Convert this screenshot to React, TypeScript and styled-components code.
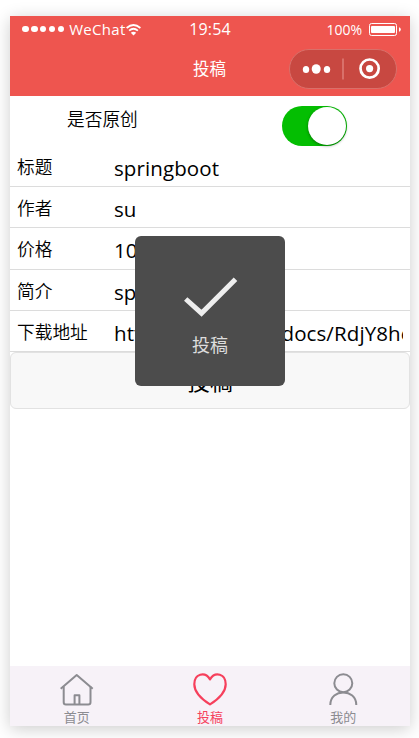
import React from 'react';
import styled, { createGlobalStyle } from 'styled-components';

const GlobalStyle = createGlobalStyle`
  * { box-sizing: border-box; }
  body {
    margin: 0;
    background: #fff;
    overflow: hidden;
    font-family: "Open Sans", "Noto Sans CJK SC", sans-serif;
    color: #000;
  }
`;

const cjk = '"Noto Sans CJK SC", sans-serif';

const Stage = styled.div`
  height: 738px;
  padding: 16px 9px 12px 10px;
  overflow: hidden;
`;

const Phone = styled.div`
  position: relative;
  display: flex;
  flex-direction: column;
  width: 400px;
  height: 710px;
  background: #fff;
  box-shadow: 0 3px 16px rgba(0, 0, 0, 0.2);
`;

const Header = styled.header`
  height: 80px;
  background: #ee554f;
  color: #fff;
`;

const StatusBar = styled.div`
  display: grid;
  grid-template-columns: 1fr auto 1fr;
  align-items: center;
  height: 27px;
  padding: 0 9px 0 12px;
  font-size: 15px;
  line-height: 27px;
`;

const Carrier = styled.div`
  display: flex;
  align-items: center;
`;

const Dots = styled.div`
  display: flex;
  gap: 2.2px;
  margin: -1px 5px 0 0;
`;

const Dot = styled.i`
  width: 6.7px;
  height: 6.7px;
  border-radius: 50%;
  background: #fff;
`;

const Network = styled.span`
  margin-top: -1px;
  font-size: 15px;
  letter-spacing: 0.3px;
`;

const Clock = styled.span`
  margin-left: -3px;
  font-size: 16px;
  letter-spacing: 0.1px;
`;

const Power = styled.div`
  display: flex;
  justify-content: flex-end;
  align-items: center;
  gap: 7px;
  font-size: 14px;
`;

const NavBar = styled.div`
  display: grid;
  grid-template-columns: 1fr auto 1fr;
  align-items: center;
  height: 53px;
  padding: 0 13px;
`;

const Title = styled.h1`
  grid-column: 2;
  margin: -4px 0 0 -1px;
  font: 400 16.5px/24px ${cjk};
`;

const Capsule = styled.div`
  justify-self: end;
  display: flex;
  align-items: center;
  width: 108px;
  height: 40px;
  margin-top: -1px;
  border: 1px solid #d9706a;
  border-radius: 20px;
  background: #c84841;
`;

const Content = styled.main`
  flex: 1;
`;

const SwitchRow = styled.div`
  display: flex;
  height: 50px;
  padding: 10px 62px 0 57px;
  justify-content: space-between;
`;

const SwitchLabel = styled.span`
  margin-top: -1px;
  font: 350 17.7px/26px ${cjk};
`;

const Switch = styled.div`
  display: flex;
  justify-content: flex-end;
  width: 65px;
  height: 40px;
  margin-right: 1px;
  padding: 1px;
  border-radius: 20px;
  background: #04be02;
`;

const Knob = styled.div`
  width: 38px;
  height: 38px;
  border-radius: 50%;
  background: #fff;
  box-shadow: 0 1px 3px rgba(0, 0, 0, 0.4);
`;

const Field = styled.div`
  display: flex;
  height: 41.2px;
  padding: 0 7px;
  border-bottom: 1px solid #dcdcdc;
`;

const FieldLabel = styled.label`
  width: 97px;
  padding-top: 7px;
  font: 350 17.7px/26px ${cjk};
  white-space: nowrap;
`;

const Value = styled.div`
  flex: 1;
  min-width: 0;
  overflow: hidden;
  padding-top: 7px;
  font-size: 20.5px;
  letter-spacing: 0.1px;
  line-height: 31px;
  white-space: nowrap;
`;

const Submit = styled.button`
  display: block;
  width: 100%;
  height: 57px;
  padding: 0;
  border: 1px solid #e2e2e2;
  border-radius: 6px;
  background: #f8f8f8;
  color: #000;
  font: 400 22.7px/55px ${cjk};
`;

const TabBar = styled.nav`
  display: grid;
  grid-template-columns: repeat(3, 1fr);
  height: 60px;
  background: #f7f2f8;
`;

const Tab = styled.div<{ $active?: boolean }>`
  display: flex;
  flex-direction: column;
  align-items: center;
  padding-top: 5px;
  color: ${(p) => (p.$active ? '#f6405c' : '#8c8c91')};
  font: 400 13px/19px ${cjk};
  svg { display: block; }
`;

const Toast = styled.div`
  position: absolute;
  left: 125px;
  top: 220px;
  display: flex;
  flex-direction: column;
  align-items: center;
  width: 150px;
  height: 150px;
  padding-top: 40px;
  border-radius: 6px;
  background: #4c4c4c;
  color: #ddd;
  font: 400 18px/26px ${cjk};
  svg { display: block; margin-bottom: 13px; }
`;

const fields = [
  ['标题', 'springboot'],
  ['作者', 'su'],
  ['价格', '10'],
  ['简介', 'springboot'],
  ['下载地址', 'https://shimo.im/docs/RdjY8hc'],
];

const Wifi = () => (
  <svg width="15" height="12" viewBox="0 0 15 12" fill="none" stroke="#fff" strokeWidth="1.7">
    <path d="M.6 4Q7.5-2 14.4 4M3.1 6.7Q7.5 2.8 11.9 6.7" />
    <path d="M7.5 11.4 4.8 8.7Q7.5 6.6 10.2 8.7Z" fill="#fff" stroke="none" />
  </svg>
);

const Battery = () => (
  <svg width="32" height="13" viewBox="0 0 32 13" fill="#fff">
    <rect x=".5" y=".5" width="27" height="12" rx="2" fill="none" stroke="#fff" />
    <rect x="2" y="3" width="24" height="7" rx="1" />
    <path d="M30 4.2q1.8.5 1.8 2.3T30 8.8Z" />
  </svg>
);

const CapsuleIcons = () => (
  <svg width="106" height="38" viewBox="0 0 106 38" fill="#fff">
    <ellipse cx="16" cy="19.5" rx="3.2" ry="3.6" />
    <ellipse cx="26.2" cy="19" rx="4.5" ry="4.8" />
    <ellipse cx="37" cy="19.5" rx="3.2" ry="3.6" />
    <path d="M53 8.5v21" stroke="#d9706a" strokeWidth="2" />
    <circle cx="79.6" cy="18.6" r="9.1" fill="none" stroke="#fff" strokeWidth="2.7" />
    <circle cx="79.6" cy="18.6" r="3.6" />
  </svg>
);

const HomeIcon = () => (
  <svg width="36" height="36" viewBox="0 0 36 36" fill="none" stroke="currentColor" strokeWidth="2" strokeLinejoin="round">
    <path d="M1.7 17.8 17.7 4l16 13.8" />
    <path d="M4.7 15.5v15.7q0 2.2 2.2 2.2h22.3q2.3 0 2.3-2.2V15.5" />
    <path d="M15.6 33.4v-9.2h4.8v9.2" />
  </svg>
);

const HeartIcon = () => (
  <svg width="36" height="36" viewBox="0 0 36 36" fill="none" stroke="currentColor" strokeWidth="2.2" strokeLinejoin="round">
    <path d="M18 8.3C12.8 0 2.3 2.9 2.3 13.2c0 7.4 7.5 15 15.7 20.2 8.2-5.2 15.7-12.8 15.7-20.2C33.7 2.9 23.2 0 18 8.3Z" />
  </svg>
);

const UserIcon = () => (
  <svg width="36" height="36" viewBox="0 0 36 36" fill="none" stroke="currentColor" strokeWidth="2">
    <circle cx="18.3" cy="12.2" r="9" />
    <path d="M5.3 34c0-16.8 26-16.8 26 0" />
  </svg>
);

const CheckIcon = () => (
  <svg width="56" height="42" viewBox="0 0 56 42" fill="none" stroke="#eee" strokeWidth="5">
    <path d="M3.7 23 19.5 37.2 53.5 3.2" />
  </svg>
);

export default function App() {
  return (
    <>
      <GlobalStyle />
      <Stage>
        <Phone>
          <Header>
            <StatusBar>
              <Carrier>
                <Dots>{[0, 1, 2, 3, 4].map((n) => <Dot key={n} />)}</Dots>
                <Network>WeChat</Network>
                <Wifi />
              </Carrier>
              <Clock>19:54</Clock>
              <Power>
                <span>100%</span>
                <Battery />
              </Power>
            </StatusBar>
            <NavBar>
              <Title>投稿</Title>
              <Capsule><CapsuleIcons /></Capsule>
            </NavBar>
          </Header>
          <Content>
            <SwitchRow>
              <SwitchLabel>是否原创</SwitchLabel>
              <Switch><Knob /></Switch>
            </SwitchRow>
            {fields.map(([label, value]) => (
              <Field key={label}>
                <FieldLabel>{label}</FieldLabel>
                <Value>{value}</Value>
              </Field>
            ))}
            <Submit>投稿</Submit>
          </Content>
          <TabBar>
            <Tab><HomeIcon />首页</Tab>
            <Tab $active><HeartIcon />投稿</Tab>
            <Tab><UserIcon />我的</Tab>
          </TabBar>
          <Toast>
            <CheckIcon />
            投稿
          </Toast>
        </Phone>
      </Stage>
    </>
  );
}
